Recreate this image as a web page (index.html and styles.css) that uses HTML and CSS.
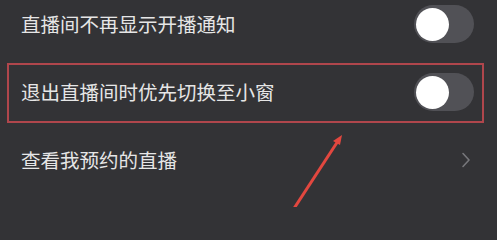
FILE: index.html
```html
<!DOCTYPE html>
<html lang="zh-CN">
<head>
<meta charset="utf-8">
<link rel="stylesheet" href="styles.css">
</head>
<body>
<div class="screen">
  <div class="list">
    <div class="row">
      <span class="label">直播间不再显示开播通知</span>
      <span class="switch"><span class="knob"></span></span>
    </div>
    <div class="row">
      <span class="label">退出直播间时优先切换至小窗</span>
      <span class="switch"><span class="knob"></span></span>
    </div>
    <div class="row">
      <span class="label">查看我预约的直播</span>
      <svg class="chevron" width="10" height="16" viewBox="0 0 10 16"><path d="M2 1.5 L8 8 L2 14.5" fill="none" stroke="#77777b" stroke-width="1.6" stroke-linecap="round" stroke-linejoin="round"/></svg>
    </div>
  </div>
  <div class="highlight"></div>
  <svg class="arrow" width="497" height="207" viewBox="0 0 497 207">
    <line x1="293" y1="210" x2="338" y2="141" stroke="#e2473f" stroke-width="3" stroke-linecap="round"/>
    <polygon points="342,135 333,141 340,145" fill="#e2473f"/>
  </svg>
</div>
</body>
</html>
```
FILE: styles.css
```css
html, body {
  margin: 0;
  padding: 0;
  background: #333336;
}
.screen {
  position: relative;
  width: 497px;
  height: 207px;
  overflow: hidden;
  background: #333336;
  font-family: "Noto Sans CJK SC", "Noto Sans", sans-serif;
}
.list {
  display: flex;
  flex-direction: column;
  margin-top: -10px;
}
.row {
  height: 68px;
  display: flex;
  align-items: center;
  justify-content: space-between;
  padding: 0 23px 0 21px;
}
.label {
  color: #e6e6e6;
  font-size: 19.5px;
  letter-spacing: 0;
  line-height: 1;
}
.switch {
  width: 60px;
  height: 38px;
  border-radius: 19px;
  background: #515156;
  display: flex;
  align-items: center;
  padding-left: 2px;
  box-sizing: border-box;
}
.knob {
  width: 33px;
  height: 33px;
  border-radius: 50%;
  background: #ffffff;
}
.chevron {
  margin-right: 3px;
}
.highlight {
  position: absolute;
  left: 7px;
  top: 63px;
  width: 473px;
  height: 56px;
  border: 2px solid #b0464c;
}
.arrow {
  position: absolute;
  left: 0;
  top: 0;
}
```
